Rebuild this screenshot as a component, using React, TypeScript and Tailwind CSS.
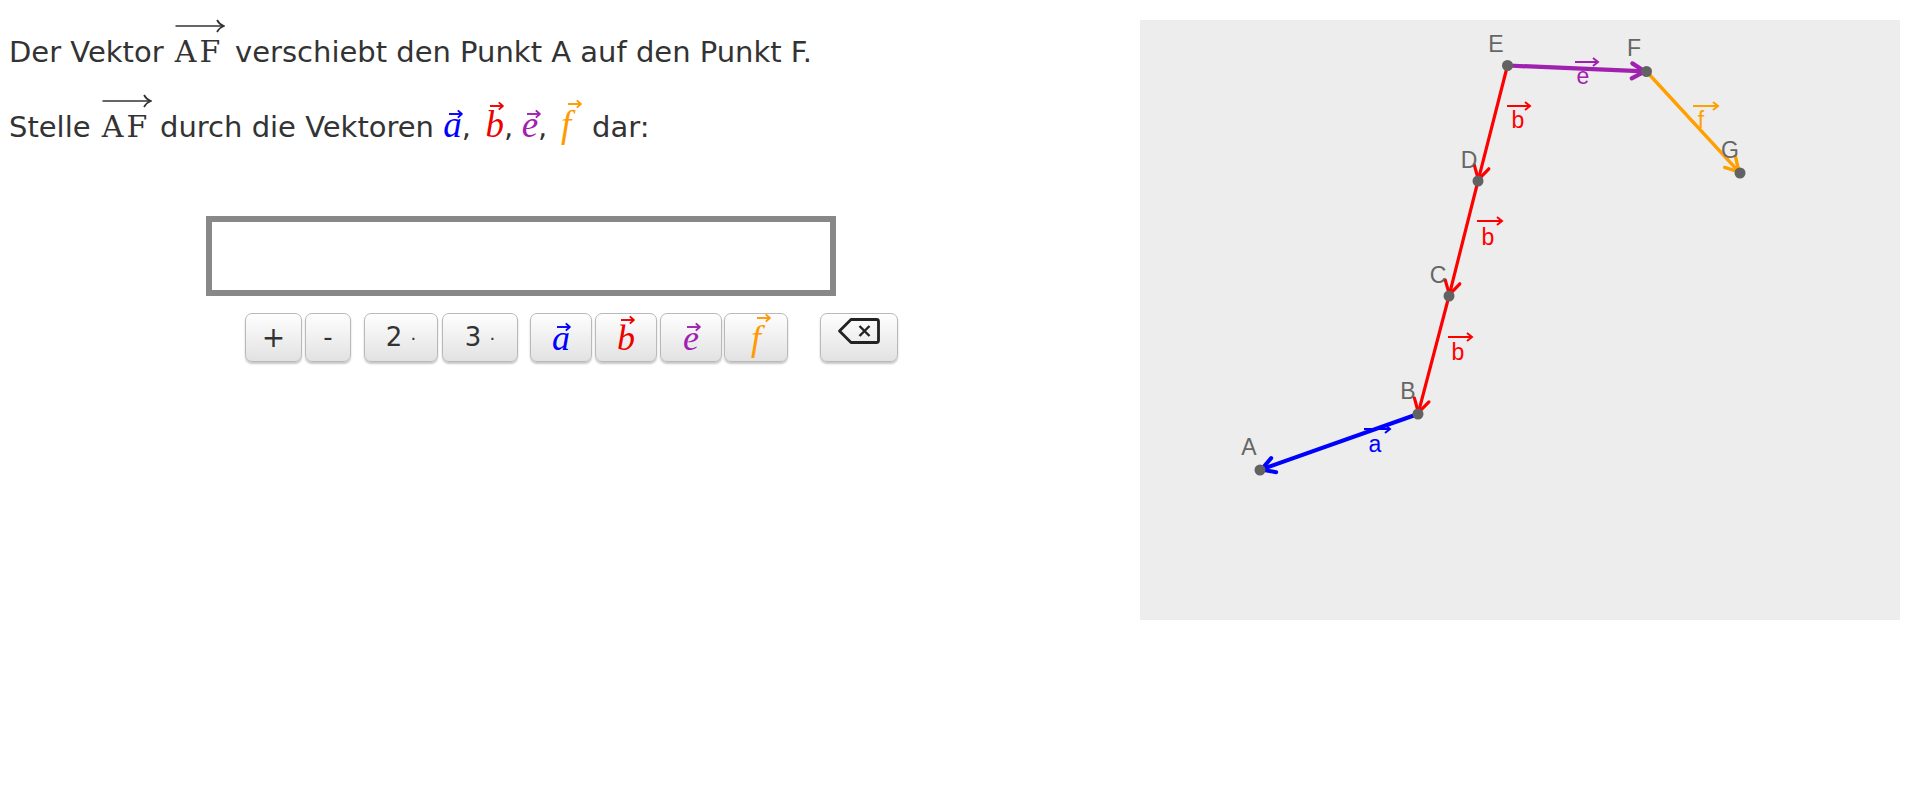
import React from "react";

type P = [number, number];

const SANS = '"DejaVu Sans", Verdana, sans-serif';
const SERIF = '"Liberation Serif", "Times New Roman", serif';
const MSERIF = '"DejaVu Serif", "Liberation Serif", serif';
const GSANS = '"Liberation Sans", Arial, sans-serif';

function SmallArrow({ color, className }: { color: string; className: string }) {
  return (
    <svg width="15" height="10" viewBox="0 0 15 10" className={className}>
      <path d="M1 5 H13.5" stroke={color} strokeWidth="1.9" fill="none" />
      <path d="M9.8 1.4 L13.8 5 L9.8 8.6" stroke={color} strokeWidth="1.9" fill="none" strokeLinejoin="round" />
    </svg>
  );
}

function LongArrow() {
  return (
    <svg width="50" height="16" viewBox="0 0 50 16" className="absolute left-[2px] top-[-17px]">
      <path d="M0.5 8 H48" stroke="#333" strokeWidth="1.7" fill="none" />
      <path d="M42 2 Q44.5 6.5 48.8 8 Q44.5 9.5 42 14" stroke="#333" strokeWidth="1.7" fill="none" />
    </svg>
  );
}

function AF({ w }: { w: string }) {
  return (
    <span className={`relative inline-block leading-[34px] ${w}`}>
      <span className="pl-[2px] text-[30px] tracking-[3px]" style={{ fontFamily: MSERIF }}>
        AF
      </span>
      <LongArrow />
    </span>
  );
}

function Vec({
  letter,
  color,
  w,
  arrowClass,
  comma,
}: {
  letter: string;
  color: string;
  w: string;
  arrowClass: string;
  comma?: boolean;
}) {
  return (
    <span className={`relative inline-block leading-[30px] ${w}`}>
      <span className="italic text-[37px]" style={{ fontFamily: SERIF, color }}>
        {letter}
      </span>
      {comma ? <span className="text-[29px]">,</span> : null}
      <SmallArrow color={color} className={`absolute ${arrowClass}`} />
    </span>
  );
}

function Key({ w, children, ml }: { w: string; children: React.ReactNode; ml: string }) {
  return (
    <div
      className={`${w} ${ml} h-[49px] shrink-0 flex items-center justify-center rounded-[7px] border border-[#b9b9b9] bg-linear-to-b from-[#fefefe] to-[#e2e2e2] shadow-[0_2px_2px_rgba(0,0,0,0.22)] text-[#333]`}
    >
      {children}
    </div>
  );
}

function KeyVec({ letter, color, arrowClass }: { letter: string; color: string; arrowClass: string }) {
  return (
    <span className="relative inline-block text-[36px] leading-[34px]" style={{ fontFamily: SERIF }}>
      <span className="italic" style={{ color }}>
        {letter}
      </span>
      <SmallArrow color={color} className={`absolute ${arrowClass}`} />
    </span>
  );
}

const pts: Record<string, P> = {
  A: [120, 450],
  B: [278, 394],
  C: [309, 276],
  D: [338, 161],
  E: [367.5, 45.5],
  F: [506.5, 51.5],
  G: [600, 153],
};

function Vector({ from, to, color, width }: { from: P; to: P; color: string; width: number }) {
  const [x1, y1] = from;
  const [x2, y2] = to;
  const dx = x2 - x1;
  const dy = y2 - y1;
  const len = Math.hypot(dx, dy);
  const ux = dx / len;
  const uy = dy / len;
  const nx = -uy;
  const ny = ux;
  const L = 13;
  const W = 7.5;
  const tx = x2 - ux * 1.5;
  const ty = y2 - uy * 1.5;
  const h1x = tx - ux * L + nx * W;
  const h1y = ty - uy * L + ny * W;
  const h2x = tx - ux * L - nx * W;
  const h2y = ty - uy * L - ny * W;
  return (
    <g stroke={color} strokeWidth={width} fill="none" strokeLinecap="round" strokeLinejoin="round">
      <line x1={x1} y1={y1} x2={tx} y2={ty} />
      <path d={`M${h1x} ${h1y} L${tx} ${ty} L${h2x} ${h2y}`} />
    </g>
  );
}

function VLabel({ x, y, ax1, ax2, ay, letter, color }: { x: number; y: number; ax1: number; ax2: number; ay: number; letter: string; color: string }) {
  return (
    <g>
      <text x={x} y={y} textAnchor="middle" fontSize="23" fill={color} style={{ fontFamily: GSANS }}>
        {letter}
      </text>
      <path d={`M${ax1} ${ay} H${ax2}`} stroke={color} strokeWidth="2" fill="none" />
      <path d={`M${ax2 - 5} ${ay - 4} L${ax2} ${ay} L${ax2 - 5} ${ay + 4}`} stroke={color} strokeWidth="2" fill="none" />
    </g>
  );
}

function PLabel({ x, y, t }: { x: number; y: number; t: string }) {
  return (
    <text x={x} y={y} textAnchor="middle" fontSize="23" fill="#666" style={{ fontFamily: GSANS }}>
      {t}
    </text>
  );
}

const RED = "#ff0000";
const BLUE = "#0000ff";
const PURPLE = "#a020b0";
const ORANGE = "#ffa000";

function Graph() {
  return (
    <svg width="760" height="600" viewBox="0 0 760 600" className="block">
      <Vector from={pts.B} to={pts.A} color={BLUE} width={4} />
      <Vector from={pts.E} to={pts.D} color={RED} width={3.2} />
      <Vector from={pts.D} to={pts.C} color={RED} width={3.2} />
      <Vector from={pts.C} to={pts.B} color={RED} width={3.2} />
      <Vector from={pts.E} to={pts.F} color={PURPLE} width={4.2} />
      <Vector from={pts.F} to={pts.G} color={ORANGE} width={3.4} />

      <VLabel x={378} y={108} ax1={367} ax2={390} ay={86} letter="b" color={RED} />
      <VLabel x={348} y={225} ax1={337} ax2={362} ay={201} letter="b" color={RED} />
      <VLabel x={318} y={340} ax1={308} ax2={332} ay={317} letter="b" color={RED} />
      <VLabel x={235} y={432} ax1={224} ax2={250} ay={409} letter="a" color={BLUE} />
      <VLabel x={443} y={64} ax1={435} ax2={458} ay={42} letter="e" color={PURPLE} />
      <VLabel x={561} y={108} ax1={553} ax2={578} ay={86} letter="f" color={ORANGE} />

      {Object.entries(pts).map(([k, [x, y]]) => (
        <circle key={k} cx={x} cy={y} r={5.5} fill="#626262" />
      ))}

      <PLabel x={356} y={32} t="E" />
      <PLabel x={494} y={36} t="F" />
      <PLabel x={590} y={138} t="G" />
      <PLabel x={329} y={148} t="D" />
      <PLabel x={298} y={263} t="C" />
      <PLabel x={268} y={379} t="B" />
      <PLabel x={109} y={435} t="A" />
    </svg>
  );
}

function Backspace() {
  return (
    <svg width="44" height="28" viewBox="0 0 44 28" className="mt-[-14px]">
      <path
        d="M14 2.5 H39.5 Q41.5 2.5 41.5 4.5 V23.5 Q41.5 25.5 39.5 25.5 H14 L2.5 14 Z"
        stroke="#222"
        strokeWidth="2.8"
        fill="none"
        strokeLinejoin="round"
      />
      <path d="M22.5 9 L32.5 19 M32.5 9 L22.5 19" stroke="#222" strokeWidth="2.4" fill="none" />
    </svg>
  );
}

export default function App() {
  return (
    <div className="w-[1920px] h-[810px] bg-white flex text-[#333]" style={{ fontFamily: SANS }}>
      <div className="w-[1140px] shrink-0 flex flex-col pl-[9px] pt-[34px]">
        <p className="text-[29px] leading-[36px] whitespace-nowrap">
          Der Vektor <AF w="w-[53px]" /> verschiebt den Punkt A auf den Punkt F.
        </p>
        <p className="mt-[39px] text-[29px] leading-[36px] whitespace-nowrap">
          Stelle <AF w="w-[51px]" /> durch die Vektoren{" "}
          <Vec letter="a" color={BLUE} w="w-[33px]" arrowClass="left-[5px] top-[-1px]" comma />{" "}
          <Vec letter="b" color="#ee0000" w="w-[27px]" arrowClass="left-[4px] top-[-9px]" comma />{" "}
          <Vec letter="e" color={PURPLE} w="w-[30px]" arrowClass="left-[4px] top-[-1px]" comma />{" "}
          <Vec letter="f" color="#ff9900" w="w-[22px]" arrowClass="left-[6px] top-[-11px]" /> dar:
        </p>

        <div className="ml-[197px] mt-[71px] w-[630px] h-[80px] border-[6px] border-[#888888] bg-white" />

        <div className="ml-[236px] mt-[17px] flex items-start">
          <Key w="w-[57px]" ml="ml-0">
            <span className="text-[28px]">+</span>
          </Key>
          <Key w="w-[46px]" ml="ml-[3px]">
            <span className="text-[26px]">-</span>
          </Key>
          <Key w="w-[74px]" ml="ml-[13px]">
            <span className="text-[26px]">
              2 <span className="text-[18px] align-middle">·</span>
            </span>
          </Key>
          <Key w="w-[76px]" ml="ml-[4px]">
            <span className="text-[26px]">
              3 <span className="text-[18px] align-middle">·</span>
            </span>
          </Key>
          <Key w="w-[62px]" ml="ml-[12px]">
            <KeyVec letter="a" color={BLUE} arrowClass="left-[4px] top-[1px]" />
          </Key>
          <Key w="w-[62px]" ml="ml-[3px]">
            <KeyVec letter="b" color="#ee0000" arrowClass="left-[3px] top-[-6px]" />
          </Key>
          <Key w="w-[62px]" ml="ml-[3px]">
            <KeyVec letter="e" color={PURPLE} arrowClass="left-[3px] top-[1px]" />
          </Key>
          <Key w="w-[64px]" ml="ml-[2px]">
            <KeyVec letter="f" color="#ff9900" arrowClass="left-[5px] top-[-8px]" />
          </Key>
          <Key w="w-[78px]" ml="ml-[32px]">
            <Backspace />
          </Key>
        </div>
      </div>
      <div className="mt-[20px] w-[760px] h-[600px] bg-[#ededed] shrink-0">
        <Graph />
      </div>
    </div>
  );
}
